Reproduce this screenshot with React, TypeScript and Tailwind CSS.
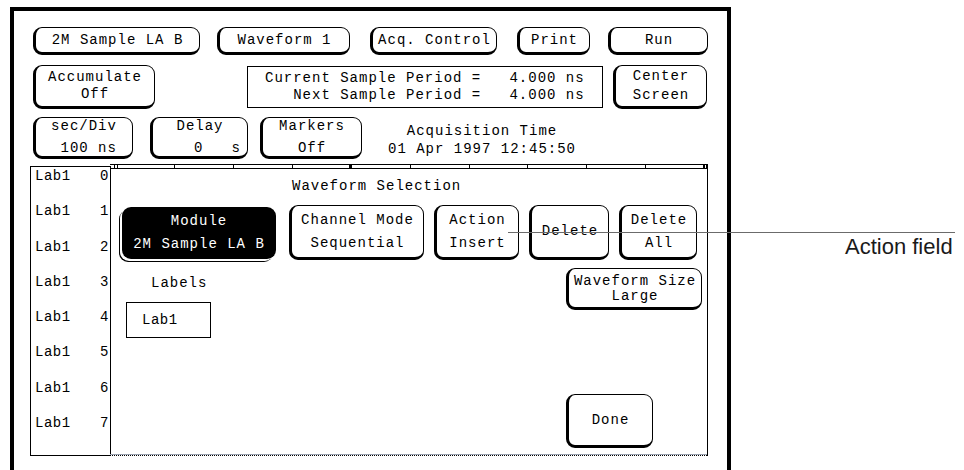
import type { ReactNode } from 'react';
import { clsx } from 'clsx';

const mono = "font-['Liberation_Mono','DejaVu_Sans_Mono',monospace] text-[14px] tracking-[1px] text-black";

function Key({ className, children }: { className?: string; children: ReactNode }) {
  return (
    <div
      className={clsx(
        'flex shrink-0 flex-col items-center justify-center whitespace-pre rounded-[9px] border border-b-[3px] border-l-[3px] border-black bg-white',
        className
      )}
    >
      {children}
    </div>
  );
}

const ticks = [0, 1, 2, 3, 4, 5, 6, 7, 8, 9];

export default function App() {
  return (
    <div className={clsx('relative h-[470px] w-[964px] overflow-hidden bg-white', mono)}>
      {/* instrument screen frame */}
      <div className="ml-[10px] mt-[7px] h-[480px] w-[721px] border-[4px] border-b-0 border-black pl-[19px] pt-[16px]">
        {/* row 1 */}
        <div className="flex h-[28px] items-stretch">
          <Key className="w-[167px] leading-[18px]">2M Sample LA B</Key>
          <Key className="ml-[17px] w-[133px] leading-[18px]">Waveform 1</Key>
          <Key className="ml-[20px] w-[127px] leading-[18px]">Acq. Control</Key>
          <Key className="ml-[20px] w-[73px] leading-[18px]">Print</Key>
          <Key className="ml-[18px] w-[100px] leading-[18px]">Run</Key>
        </div>

        {/* row 2 */}
        <div className="mt-[10px] flex h-[44px] items-start">
          <Key className="h-[44px] w-[122px] leading-[17px]">
            <span>Accumulate</span>
            <span>Off</span>
          </Key>
          <div className="ml-[92px] mt-[1px] flex h-[42px] w-[356px] flex-col justify-center whitespace-pre border border-black pl-[17px] leading-[17px]">
            <span>Current Sample Period =   4.000 ns</span>
            <span>   Next Sample Period =   4.000 ns</span>
          </div>
          <Key className="ml-[10px] h-[44px] w-[94px] leading-[19px]">
            <span>Center</span>
            <span>Screen</span>
          </Key>
        </div>

        {/* row 3 */}
        <div className="mt-[8px] flex h-[42px] items-start">
          <Key className="h-[42px] w-[100px] leading-[22px]">
            <span>sec/Div</span>
            <span> 100 ns</span>
          </Key>
          <Key className="ml-[17px] h-[42px] w-[98px] leading-[22px]">
            <span>Delay</span>
            <span className="self-end pr-[6px]">0   s</span>
          </Key>
          <Key className="ml-[12px] h-[42px] w-[102px] leading-[22px]">
            <span>Markers</span>
            <span>Off</span>
          </Key>
          <div className="flex h-[42px] w-[240px] flex-col items-center justify-center whitespace-pre pt-[3px] leading-[18px]">
            <span>Acquisition Time</span>
            <span>01 Apr 1997 12:45:50</span>
          </div>
        </div>

        {/* waveform area */}
        <div className="ml-[-3px] mt-[5px] flex h-[292px] items-start">
          <div className="mt-[2px] flex h-[290px] w-[81px] flex-col border border-black tracking-[0.5px]">
            {[0, 1, 2, 3, 4, 5, 6, 7].map((n) => (
              <div key={n} className="flex h-[35.3px] items-start justify-between pl-[4px] pr-[1px] leading-[18px]">
                <span>Lab1</span>
                <span>{n}</span>
              </div>
            ))}
          </div>

          <div className="ml-[-1px] flex h-[292px] w-[598px] flex-col border-r border-black">
            {/* time scale bar */}
            <div className="relative h-[5px] border-y border-black">
              <div className="absolute left-[4px] top-[-1px] h-[5px] w-[4px] border border-black" />
              {ticks.map((t) => (
                <div key={t} className="absolute top-0 h-[3px] w-px bg-black" style={{ left: 64 + t * 58.9 }} />
              ))}
              <div className="absolute left-[239px] top-0 h-[3px] w-[2px] bg-black" />
              <div className="absolute right-0 top-[-1px] h-[5px] w-[4px] border border-black" />
            </div>

            {/* Waveform Selection dialog */}
            <div className="flex flex-1 flex-col border-b border-gray-400">
              <div className="ml-[182px] mt-[8px] leading-[18px]">Waveform Selection</div>

              <div className="mt-[10px] flex items-start pl-[12px]">
                <div className="mt-[2px] flex h-[52px] w-[154px] shrink-0 flex-col items-center justify-center whitespace-pre rounded-[9px] bg-black leading-[23px] text-white shadow-[-2px_2px_0_0_white,-3px_3px_0_0_black]">
                  <span>Module</span>
                  <span>2M Sample LA B</span>
                </div>
                <Key className="ml-[13px] h-[55px] w-[135px] leading-[23px]">
                  <span>Channel Mode</span>
                  <span>Sequential</span>
                </Key>
                <Key className="ml-[10px] h-[55px] w-[85px] leading-[23px]">
                  <span>Action</span>
                  <span>Insert</span>
                </Key>
                <Key className="ml-[10px] h-[55px] w-[80px] leading-[23px]">
                  <span>Delete</span>
                </Key>
                <Key className="ml-[10px] h-[55px] w-[78px] leading-[23px]">
                  <span>Delete</span>
                  <span>All</span>
                </Key>
              </div>

              <div className="mt-[8px] flex items-start">
                <div className="flex w-[456px] flex-col">
                  <span className="ml-[41px] mt-[6px] leading-[18px]">Labels</span>
                  <div className="ml-[16px] mt-[10px] flex h-[36px] w-[85px] items-center border border-black pl-[15px] tracking-[0.5px]">
                    Lab1
                  </div>
                </div>
                <Key className="h-[42px] w-[136px] pt-[2px] leading-[15px]">
                  <span>Waveform Size</span>
                  <span>Large</span>
                </Key>
              </div>

              <Key className="ml-[456px] mt-[56px] h-[54px] w-[87px] leading-[18px]">
                <span>Done</span>
              </Key>
            </div>
            <div className="h-px border-b border-dotted border-black" />
          </div>
        </div>
      </div>

      {/* callout */}
      <div className="absolute left-[508px] top-[232px] h-px w-[447px] bg-[#6b6b6b]" />
      <div className="absolute left-[845px] top-[234px] font-['Liberation_Sans',Arial,sans-serif] text-[22px] leading-[26px] tracking-normal text-[#1a1a1a]">
        Action field
      </div>
    </div>
  );
}
